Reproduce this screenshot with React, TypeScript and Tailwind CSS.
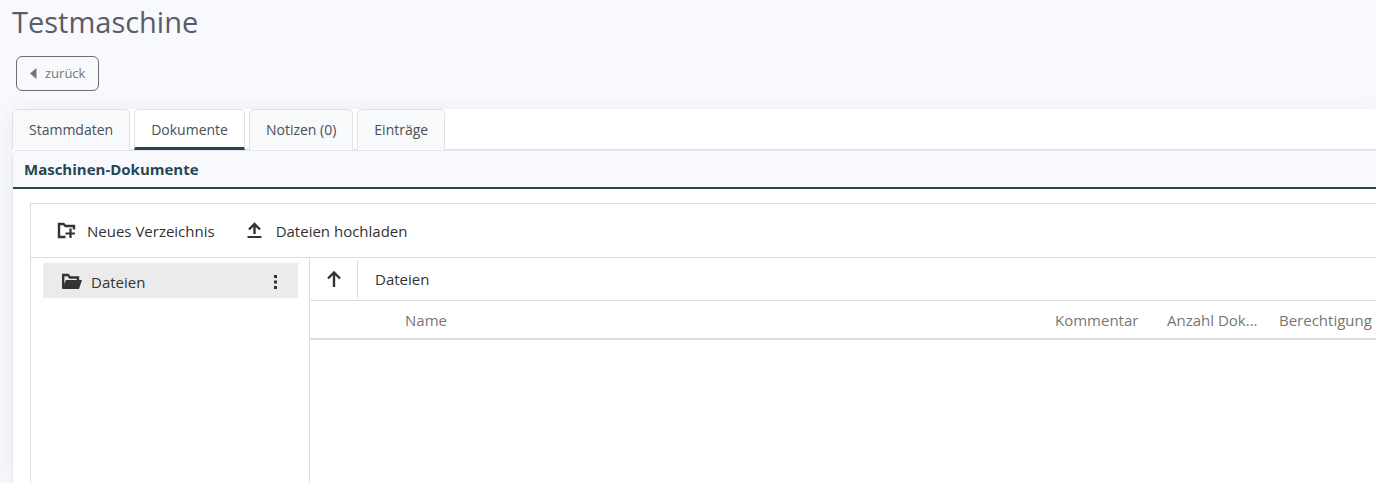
import { useState } from 'react';
import clsx from 'clsx';

const TABS = ['Stammdaten', 'Dokumente', 'Notizen (0)', 'Einträge'] as const;
type Tab = (typeof TABS)[number];

function NewFolderIcon() {
  return (
    <svg width="20" height="20" viewBox="0 0 20 20" fill="none" stroke="currentColor" aria-hidden="true">
      <path d="M9.500 16H3V3h4.500l2 2H18v3.500" strokeWidth="2.400" />
      <path d="M14.500 7.500v9.500M9.500 12.500h9.500" strokeWidth="2.200" />
    </svg>
  );
}

function UploadIcon() {
  return (
    <svg width="20" height="20" viewBox="0 0 20 20" fill="none" stroke="currentColor" aria-hidden="true">
      <path d="M9.500 13V3.500M4 8.500L9.500 3l5.500 5.500" strokeWidth="2.400" />
      <path d="M2.500 16h14" strokeWidth="2" />
    </svg>
  );
}

function OpenFolderIcon() {
  return (
    <svg width="22" height="20" viewBox="0 0 22 20" aria-hidden="true">
      <path d="M2.200 16V3H7l2 2.500h8V9" fill="none" stroke="currentColor" strokeWidth="2.400" />
      <path d="M5 8h16l-3 9H1z" fill="currentColor" />
    </svg>
  );
}

function ArrowUpIcon() {
  return (
    <svg width="20" height="20" viewBox="0 0 20 20" fill="none" stroke="currentColor" strokeWidth="2.400" aria-hidden="true">
      <path d="M10 18V4M4 9.500L10 3.500l6 6" />
    </svg>
  );
}

function FileManager() {
  return (
    <div className="flex grow flex-col border-t border-l border-[#ddd] text-[15px] leading-5 text-[#333]">
      <div className="flex h-[54px] items-center gap-[30px] border-b border-[#ddd] pl-[25px]">
        <button type="button" className="flex items-center gap-[11px]">
          <NewFolderIcon />
          Neues Verzeichnis
        </button>
        <button type="button" className="flex items-center gap-[11px]">
          <UploadIcon />
          Dateien hochladen
        </button>
      </div>

      <div className="flex grow">
        <aside className="w-[279px] shrink-0 border-r border-[#ddd] py-[5px] pr-[11px] pl-3">
          <div className="flex h-[35px] items-center bg-[#ebebeb] pt-[2px] pr-3 pl-[18px]">
            <button type="button" className="flex grow items-center gap-2 text-left">
              <OpenFolderIcon />
              Dateien
            </button>
            <button type="button" aria-label="Aktionen" className="flex w-5 justify-center">
              <svg width="4" height="16" viewBox="0 0 4 16" fill="currentColor" aria-hidden="true">
                <path d="M0 1h3v3H0zM0 6.500h3v3H0zM0 12h3v3H0z" />
              </svg>
            </button>
          </div>
        </aside>

        <section className="min-w-0 grow">
          <nav className="flex h-[43px] items-center border-b border-[#ddd]">
            <button type="button" aria-label="Nach oben" className="flex h-[38px] w-12 items-center justify-center border-r border-[#ddd]">
              <ArrowUpIcon />
            </button>
            <a href="#dateien" className="pl-[17px]">Dateien</a>
          </nav>
          <table className="w-full table-fixed border-collapse text-left text-[#767676]">
            <thead>
              <tr className="h-[38px] border-b-2 border-[#ddd]">
                <td className="w-[85px]" />
                <th className="px-[10px] font-normal">Name</th>
                <th className="w-28 px-[10px] font-normal">Kommentar</th>
                <th className="w-28 px-[10px] font-normal whitespace-nowrap" title="Anzahl Dokumente">Anzahl Dok...</th>
                <th className="w-[107px] pl-[10px] font-normal">Berechtigung</th>
              </tr>
            </thead>
          </table>
        </section>
      </div>
    </div>
  );
}

export default function App() {
  const [active, setActive] = useState<Tab>('Dokumente');

  return (
    <div className="flex min-h-screen flex-col overflow-hidden bg-[#f8f9fd] pl-3 font-['Open_Sans','Noto_Sans',sans-serif]">
      <h1 className="pt-1 text-[29px] leading-9 text-[#5a5c69]">Testmaschine</h1>

      <div className="px-1 pt-4 pb-[18px]">
        <button
          type="button"
          className="flex h-[35px] items-center gap-2 rounded-md border border-[#6f6f6f] px-[13px] text-[13px] text-[#757575]"
        >
          <svg width="7" height="12" viewBox="0 0 7 12" fill="currentColor" aria-hidden="true">
            <path d="M6.500 0v11L0 5.500z" />
          </svg>
          zurück
        </button>
      </div>

      <div className="flex grow flex-col bg-white shadow-[0_2px_20px_rgba(58,59,69,0.07)]">
        <div role="tablist" className="flex h-[41px] gap-1 border-b border-[#dee2e6]">
          {TABS.map((tab) => (
            <button
              key={tab}
              type="button"
              role="tab"
              aria-selected={tab === active}
              onClick={() => setActive(tab)}
              className={clsx(
                '-mb-px rounded-t-[5px] border border-[#dee2e6] px-4 text-[14px] text-[#495057]',
                tab === active ? 'border-b-[3px] border-b-[#264653] bg-white pt-[2px]' : 'border-b-white bg-[#f8f9fa]',
              )}
            >
              {tab}
            </button>
          ))}
        </div>

        <div className="flex grow flex-col rounded-tl-md border-t border-l border-[#e3e6f0]">
          <h2 className="flex h-[38px] items-center rounded-tl-md border-b-2 border-[#264653] bg-[#f8f9fd] pt-px pl-[11px] text-[15px] font-bold text-[#264653]">
            Maschinen-Dokumente
          </h2>
          <div className="flex grow flex-col pt-[14px] pl-[17px]">
            <FileManager />
          </div>
        </div>
      </div>
    </div>
  );
}
